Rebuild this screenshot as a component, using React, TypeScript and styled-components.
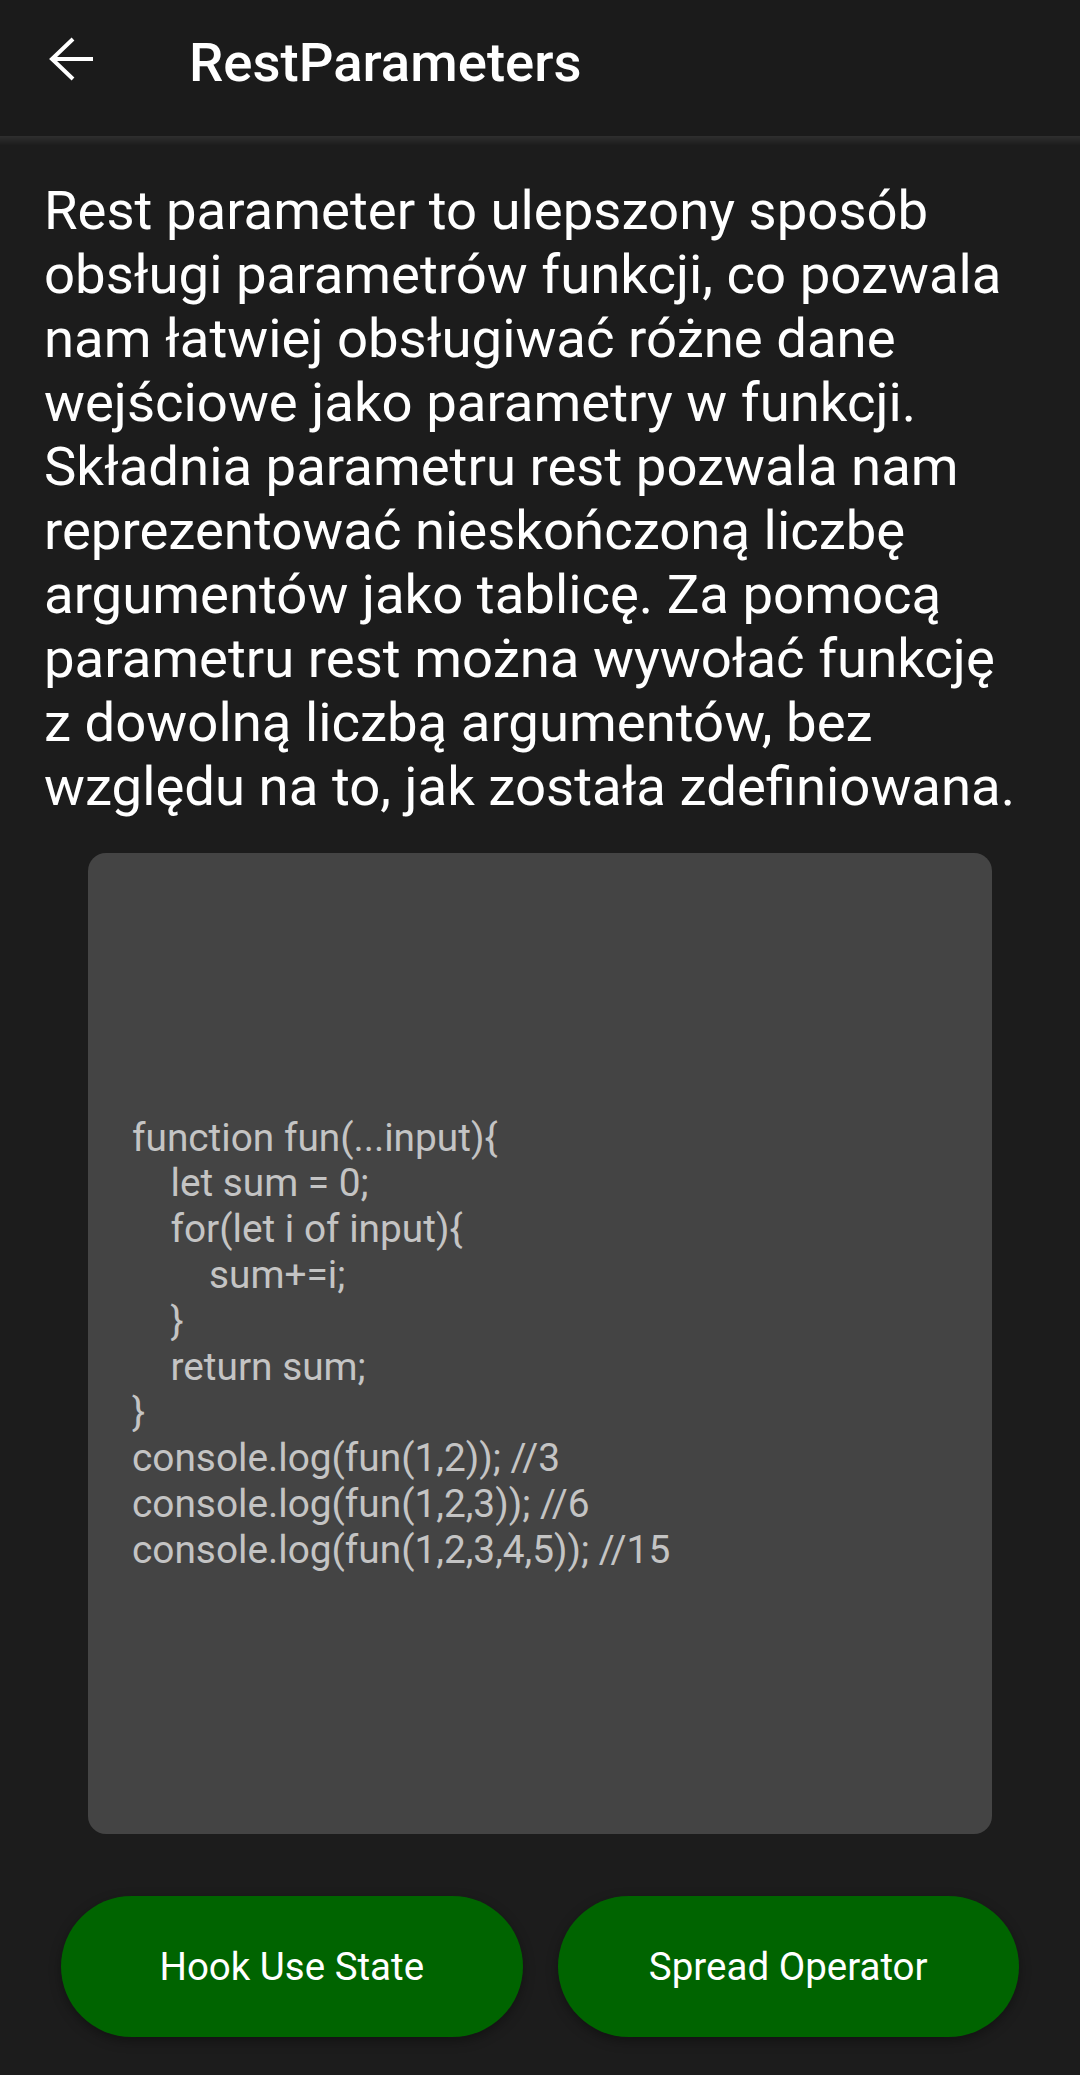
import React from "react";
import styled, { createGlobalStyle } from "styled-components";

const GlobalStyle = createGlobalStyle`
  html, body {
    margin: 0;
    padding: 0;
    background: #1c1c1c;
  }
  body {
    font-family: Roboto, "Noto Sans", "Liberation Sans", sans-serif;
    -webkit-font-smoothing: antialiased;
  }
  * { box-sizing: border-box; }
`;

const Screen = styled.div`
  width: 1080px;
  height: 2075px;
  display: flex;
  flex-direction: column;
  background: #1c1c1c;
  overflow: hidden;
`;

const TopBar = styled.header`
  height: 136px;
  flex: none;
  display: flex;
  align-items: center;
  padding: 0 0 12px 49px;
  background: #1b1b1b;
`;

const BackButton = styled.button`
  width: 44px;
  height: 44px;
  padding: 0;
  margin: 0 96px 6px 0;
  border: none;
  background: transparent;
  display: flex;
  align-items: center;
  justify-content: center;
  cursor: pointer;
`;

const Title = styled.h1`
  margin: 0;
  font-size: 54.5px;
  font-weight: 500;
  color: #ffffff;
  line-height: normal;
`;

const BarShadow = styled.div`
  height: 9px;
  flex: none;
  background: linear-gradient(#2f2f2f, #1d1d1d);
`;

const Content = styled.main`
  flex: 1;
  display: flex;
  flex-direction: column;
  padding: 33px 0 0;
  background: #1c1c1c;
`;

const Description = styled.p`
  margin: 0;
  padding: 0 56px 0 44px;
  font-size: 54.5px;
  line-height: 64px;
  color: #ffffff;
`;

const CodeCard = styled.section`
  margin: 35px 88px 0;
  height: 981px;
  border-radius: 18px;
  background: #444444;
  display: flex;
  flex-direction: column;
  justify-content: center;
  padding: 0 44px;
`;

const Code = styled.pre`
  margin: 0;
  font-family: Roboto, "Noto Sans", "Liberation Sans", sans-serif;
  font-size: 38.8px;
  line-height: 45.8px;
  color: #c4c4c4;
  white-space: pre;
`;

const ButtonRow = styled.nav`
  display: flex;
  gap: 35px;
  padding: 0 61px;
  margin-top: 62px;
`;

const NavButton = styled.button`
  flex: 1;
  height: 141px;
  border: none;
  border-radius: 71px;
  background: #006400;
  color: #ffffff;
  font-family: Roboto, "Noto Sans", "Liberation Sans", sans-serif;
  font-size: 38.5px;
  font-weight: 400;
  box-shadow: 0 4px 12px rgba(0, 0, 0, 0.35);
  cursor: pointer;
`;

const codeText = `function fun(...input){
    let sum = 0;
    for(let i of input){
        sum+=i;
    }
    return sum;
}
console.log(fun(1,2)); //3
console.log(fun(1,2,3)); //6
console.log(fun(1,2,3,4,5)); //15`;

const ArrowIcon = () => (
  <svg width="44" height="44" viewBox="0 0 44 44" fill="none">
    <path
      d="M44 22H3M24 2L3 22l21 20"
      stroke="#ffffff"
      strokeWidth="4"
      strokeLinecap="butt"
      strokeLinejoin="miter"
    />
  </svg>
);

export default function App() {
  return (
    <>
      <GlobalStyle />
      <Screen>
        <TopBar>
          <BackButton aria-label="Wstecz">
            <ArrowIcon />
          </BackButton>
          <Title>RestParameters</Title>
        </TopBar>
        <BarShadow />
        <Content>
          <Description>
            Rest parameter to ulepszony sposób obsługi parametrów funkcji, co
            pozwala nam łatwiej obsługiwać różne dane wejściowe jako parametry w
            funkcji. Składnia parametru rest pozwala nam reprezentować
            nieskończoną liczbę argumentów jako tablicę. Za pomocą parametru rest
            można wywołać funkcję z dowolną liczbą argumentów, bez względu na
            to, jak została zdefiniowana.
          </Description>
          <CodeCard>
            <Code>{codeText}</Code>
          </CodeCard>
          <ButtonRow>
            <NavButton>Hook Use State</NavButton>
            <NavButton>Spread Operator</NavButton>
          </ButtonRow>
        </Content>
      </Screen>
    </>
  );
}
